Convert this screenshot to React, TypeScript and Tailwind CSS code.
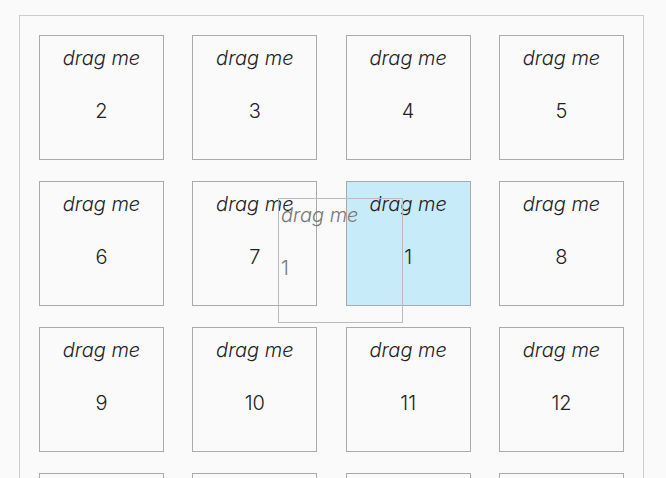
import React from 'react';

const items = [2, 3, 4, 5, 6, 7, 1, 8, 9, 10, 11, 12, 13, 14, 15, 16];

function Tile({ n, active }: { n: number; active?: boolean }) {
  return (
    <div
      className={
        'flex h-[125px] w-[125px] flex-col items-center border border-[#aaaaaa] pt-[10px] text-[20px] leading-[24px] font-light text-[#222] ' +
        (active ? 'bg-[#c8ebfa]' : 'bg-[#fafafa]')
      }
    >
      <span className="italic">drag me</span>
      <span className="mt-[29px]">{n}</span>
    </div>
  );
}

export default function App() {
  return (
    <div className="relative h-[478px] overflow-hidden bg-[#fafafa] font-['Inter',sans-serif]">
      <div className="ml-[19px] mt-[15px] w-[625px] border border-[#cccccc] p-[19px]">
        <div className="flex flex-wrap justify-between gap-y-[21px]">
          {items.map((n) => (
            <Tile key={n} n={n} active={n === 1} />
          ))}
        </div>
      </div>

      {/* drag ghost */}
      <div className="absolute left-[278px] top-[198px] h-[125px] w-[125px] border border-[#bbbbbb] pl-[2px] pt-[4px] text-[20px] leading-[24px] font-light text-[#777]">
        <div className="italic">drag me</div>
        <div className="mt-[29px]">1</div>
      </div>
    </div>
  );
}
